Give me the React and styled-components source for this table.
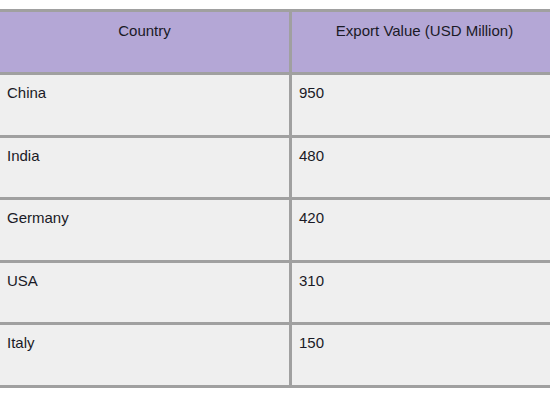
import React from "react";
import styled, { createGlobalStyle } from "styled-components";

const Global = createGlobalStyle`
  html, body { margin: 0; padding: 0; background: #ffffff; overflow: hidden; }
  body { font-family: "Liberation Sans", Arial, sans-serif; }
`;

const Page = styled.div`
  width: 550px;
  height: 400px;
  padding-top: 9px;
  box-sizing: border-box;
  overflow: hidden;
`;

const Table = styled.table`
  margin-left: -3px;
  width: 563px;
  border-collapse: separate;
  border-spacing: 3px;
  background: #a0a0a0;
  table-layout: fixed;
  font-size: 15px;
  line-height: 17px;
  color: #1a1a26;
`;

const HeadCell = styled.th`
  width: ${(p) => p.$w}px;
  height: 60px;
  box-sizing: border-box;
  padding: 10px 8px 0;
  background: #b4a7d6;
  font-weight: normal;
  text-align: center;
  vertical-align: top;
`;

const Cell = styled.td`
  height: 59.5px;
  box-sizing: border-box;
  padding: 9px 7px 0;
  background: #efefef;
  text-align: left;
  vertical-align: top;
`;

const rows = [
  ["China", "950"],
  ["India", "480"],
  ["Germany", "420"],
  ["USA", "310"],
  ["Italy", "150"],
];

export default function App() {
  return (
    <Page>
      <Global />
      <Table>
        <thead>
          <tr>
            <HeadCell $w={289}>Country</HeadCell>
            <HeadCell $w={265}>Export Value (USD Million)</HeadCell>
          </tr>
        </thead>
        <tbody>
          {rows.map(([c, v]) => (
            <tr key={c}>
              <Cell>{c}</Cell>
              <Cell>{v}</Cell>
            </tr>
          ))}
        </tbody>
      </Table>
    </Page>
  );
}
